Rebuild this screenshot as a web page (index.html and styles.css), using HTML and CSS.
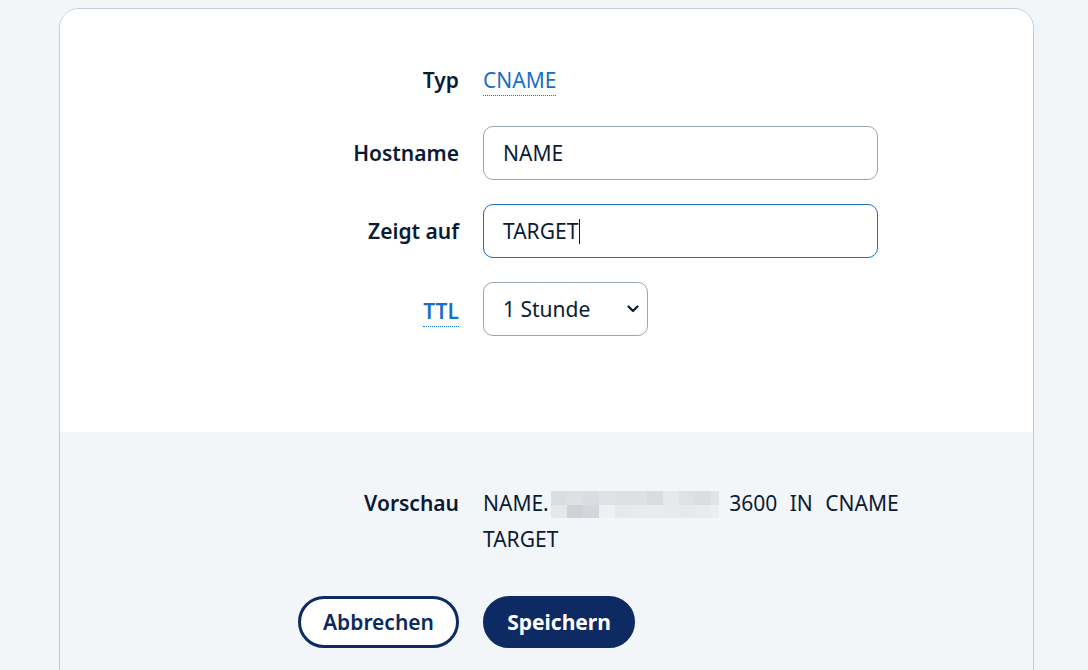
FILE: index.html
```html
<!DOCTYPE html>
<html lang="de">
<head>
<meta charset="utf-8">
<title>DNS-Eintrag bearbeiten</title>
<link rel="stylesheet" href="styles.css">
</head>
<body>
<div class="card">
  <div class="card-main">
    <div class="form-grid">
      <div class="label row-typ">Typ</div>
      <div class="value row-typ"><span class="dotted">CNAME</span></div>

      <div class="label">Hostname</div>
      <div class="field"><div class="textbox">NAME</div></div>

      <div class="label">Zeigt auf</div>
      <div class="field"><div class="textbox focused">TARGET<span class="caret"></span></div></div>

      <div class="label"><span class="dotted link">TTL</span></div>
      <div class="field">
        <div class="select-wrap">
          <select class="select">
            <option>1 Stunde</option>
          </select>
          <svg class="chevron" width="12" height="8" viewBox="0 0 12 8"><path d="M1.5 1.5 L6 6 L10.5 1.5" fill="none" stroke="#0b1b36" stroke-width="2.2" stroke-linecap="round" stroke-linejoin="round"/></svg>
        </div>
      </div>
    </div>
  </div>
  <div class="card-footer">
    <div class="form-grid preview-grid">
      <div class="label preview-label">Vorschau</div>
      <div class="preview"><span class="host">NAME.</span><span class="blur"></span> <span class="rec">3600 IN CNAME</span> TARGET</div>

      <div class="btn-cell-left"><button class="btn btn-outline">Abbrechen</button></div>
      <div class="btn-cell-right"><button class="btn btn-primary">Speichern</button></div>
    </div>
  </div>
</div>
</body>
</html>
```

FILE: styles.css
```css
html, body {
  margin: 0;
  padding: 0;
  background: #f3f6f9;
}

body {
  font-family: "Noto Sans", "Open Sans", sans-serif;
  color: #0b1b36;
  font-size: 21px;
  padding-top: 8px;
  height: 670px;
  overflow: hidden;
}

.card {
  margin-left: 59px;
  width: 973px;
  border: 1px solid #c3cbd6;
  border-radius: 20px;
  overflow: hidden;
  background: #ffffff;
  min-height: 800px;
}

.card-main {
  background: #ffffff;
  padding: 49px 0 96px 0;
}

.card-footer {
  background: #f3f6f9;
  padding: 53px 0 60px 0;
  min-height: 300px;
}

.form-grid {
  display: grid;
  grid-template-columns: 399px 420px;
  column-gap: 24px;
  row-gap: 24px;
  align-items: center;
}

.label {
  font-weight: 600;
  text-align: right;
  line-height: 28px;
}

.row-typ {
  height: 44px;
  display: flex;
  align-items: center;
}

.label.row-typ {
  justify-content: flex-end;
}

.value {
  color: #1a6fc4;
}

.dotted {
  display: inline-block;
  line-height: 26px;
  padding-bottom: 2px;
  border-bottom: 1px dotted #1a6fc4;
  color: #1a6fc4;
}

.row-typ .dotted {
  margin-top: 2px;
}

.link {
  font-weight: 600;
  margin-top: 6px;
}

.field {
  display: flex;
}

.textbox {
  box-sizing: border-box;
  width: 395px;
  height: 54px;
  border: 1px solid #9aa5b5;
  border-radius: 10px;
  padding: 0 19px;
  display: flex;
  align-items: center;
  background: #ffffff;
  color: #0b1b36;
}

.textbox.focused {
  border-color: #1a6fc4;
}

.caret {
  display: inline-block;
  width: 1px;
  height: 25px;
  background: #0b1b36;
  margin-left: 1px;
}

.select-wrap {
  position: relative;
  width: 165px;
  height: 54px;
}

.select {
  appearance: none;
  -webkit-appearance: none;
  box-sizing: border-box;
  width: 165px;
  height: 54px;
  border: 1px solid #9aa5b5;
  border-radius: 10px;
  background: #ffffff;
  padding: 0 19px;
  font-family: inherit;
  font-size: 21px;
  color: #0b1b36;
}

.chevron {
  position: absolute;
  right: 9px;
  top: 23px;
  pointer-events: none;
}

.preview-grid {
  row-gap: 39px;
  align-items: start;
}

.preview-label {
  line-height: 36px;
}

.preview {
  line-height: 36px;
  width: 420px;
  word-spacing: 5px;
}

.rec {
  word-spacing: 7px;
}

.blur {
  display: inline-block;
  width: 168px;
  height: 27px;
  margin-left: 2px;
  vertical-align: -7px;
  background:
    linear-gradient(to right,
      #e5e7ea 0 16px, #cfd2d6 16px 32px, #d2d6dd 32px 48px, #eef1f4 48px 64px,
      #e6e8eb 64px 80px, #e8eaed 80px 96px, #e9ebee 96px 112px, #e8eaed 112px 128px,
      #e6e8eb 128px 144px, #e9ebee 144px 160px, #eceef1 160px 168px) 0 14px / 168px 13px no-repeat,
    linear-gradient(to right,
      #dcdde1 0 16px, #dfe0e4 16px 32px, #d9dce1 32px 48px, #dfe1e5 48px 64px,
      #dee0e4 64px 80px, #dee0e4 80px 96px, #d8dbe0 96px 112px, #e6e8eb 112px 128px,
      #dfe1e5 128px 144px, #dadde2 144px 160px, #e2e4e8 160px 168px) 0 0 / 168px 14px no-repeat;
}

.btn-cell-left {
  display: flex;
  justify-content: flex-end;
}

.btn-cell-right {
  display: flex;
}

.btn {
  box-sizing: border-box;
  height: 52px;
  border-radius: 26px;
  font-family: inherit;
  font-size: 21px;
  font-weight: 600;
  border: 3px solid #0d2a63;
  padding: 0 20px;
  cursor: pointer;
}

.btn-outline {
  background: #ffffff;
  color: #0d2a63;
  width: 161px;
}

.btn-primary {
  background: #0d2a63;
  color: #ffffff;
  width: 152px;
  font-weight: 700;
}
```
